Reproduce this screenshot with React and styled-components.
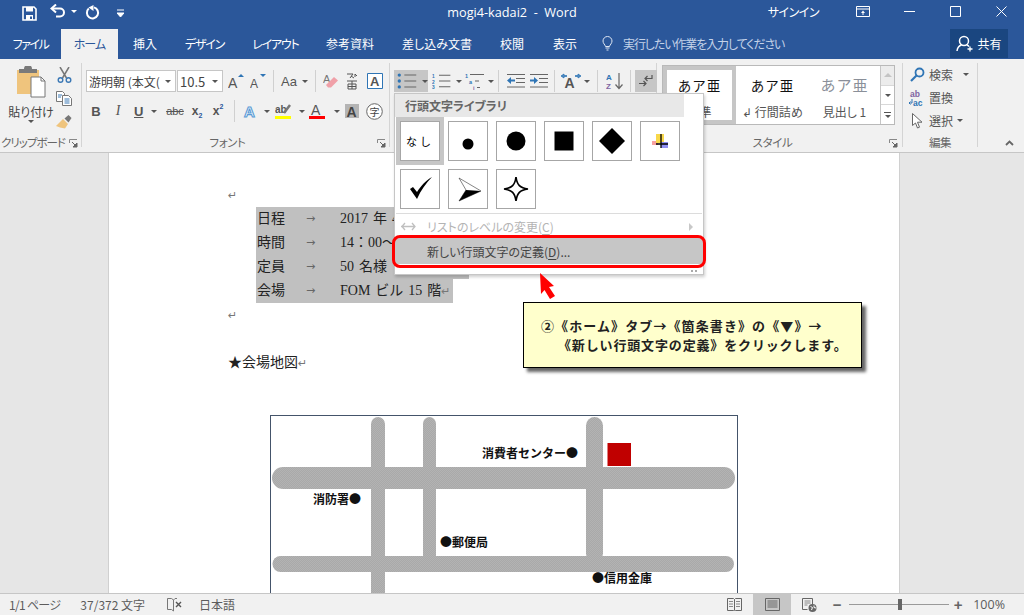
import React from "react";
import styled, { createGlobalStyle } from "styled-components";

const GlobalStyle = createGlobalStyle`
  html, body { margin: 0; padding: 0; background: #e6e6e6; }
  body { font-family: "Noto Sans CJK JP", "Noto Sans", sans-serif; font-size: 12px; }
  * { box-sizing: border-box; }
`;

const UI_FONT = `"Noto Sans CJK JP", "Noto Sans", sans-serif`;

const Screen = styled.div`
  position: relative;
  width: 1024px;
  height: 615px;
  overflow: hidden;
  display: flex;
  flex-direction: column;
  font-feature-settings: "palt";
`;

/* title bar */
const TitleBar = styled.div`
  height: 29px;
  padding-bottom: 6px;
  background: #2b579a;
  color: #fff;
  display: grid;
  grid-template-columns: 1fr auto 1fr;
  align-items: center;
`;
const Quick = styled.div`
  display: flex;
  align-items: center;
  padding-left: 21px;
`;
const QuickBtn = styled.span`
  width: ${(p) => p.$w}px;
  height: 24px;
  margin-left: ${(p) => p.$ml || 0}px;
  margin-top: ${(p) => p.$mt || 0}px;
  display: inline-flex;
  align-items: center;
  justify-content: center;
`;
const DocTitle = styled.div`
  font-family: "Open Sans", sans-serif;
  font-size: 12.7px;
  white-space: pre;
  margin-top: -2px;
`;
const WinControls = styled.div`
  display: flex;
  align-items: center;
  justify-content: flex-end;
`;
const SignIn = styled.span`
  font-size: 12px;
  letter-spacing: -0.5px;
  margin-right: 21px;
  margin-top: -2px;
`;
const WinBtn = styled.span`
  width: 46px;
  height: 24px;
  display: inline-flex;
  align-items: center;
  justify-content: center;
  margin-top: -3px;
`;

/* tabs */
const TabBar = styled.div`
  height: 30px;
  background: #2b579a;
  display: flex;
  align-items: stretch;
  color: #fff;
`;
const Tab = styled.div`
  width: ${(p) => p.$w}px;
  padding-bottom: 2px;
  display: flex;
  align-items: center;
  justify-content: center;
  font-size: 12px;
  letter-spacing: ${(p) => p.$ls || 0}px;
  background: ${(p) => (p.$active ? "#f1f1f1" : "transparent")};
  color: ${(p) => (p.$active ? "#2b579a" : "#fff")};
`;
const TellMe = styled.div`
  display: flex;
  align-items: center;
  gap: 10px;
  margin-left: 8px;
  padding-bottom: 2px;
  font-size: 12px;
  letter-spacing: -1.1px;
  color: #c3d2e8;
  flex: 1;
`;
const Share = styled.div`
  width: 58px;
  height: 29px;
  margin-right: 16px;
  background: #1a4680;
  display: flex;
  align-items: center;
  justify-content: center;
  gap: 3px;
  font-size: 12px;
`;

/* ribbon */
const Ribbon = styled.div`
  height: 94px;
  background: #f1f1f1;
  border-bottom: 1px solid #c6c6c6;
  display: flex;
  padding: 4px 0 5px;
  color: #555;
`;
const Group = styled.div`
  position: relative;
  width: ${(p) => p.$w}px;
  border-right: 1px solid #d4d4d4;
  display: flex;
  flex-direction: column;
`;
const GroupBody = styled.div`
  flex: 1;
  min-height: 0;
  display: flex;
`;
const GroupLabel = styled.div`
  height: 14px;
  margin-bottom: -2px;
  line-height: 14px;
  text-align: center;
  white-space: nowrap;
  font-size: 11.5px;
  letter-spacing: ${(p) => p.$ls || -0.4}px;
  color: #666;
  padding-right: ${(p) => p.$pr || 0}px;
`;
const Launcher = styled.span`
  position: absolute;
  right: ${(p) => p.$r || 4}px;
  bottom: -1px;
  width: 9px;
  height: 9px;
  display: inline-flex;
`;
const PasteBtn = styled.div`
  width: 52px;
  padding-left: 10px;
  padding-top: 3px;
  display: flex;
  flex-direction: column;
  align-items: center;
  font-size: 12px;
  color: #444;
`;
const PasteText = styled.span`
  margin-top: 6px;
  line-height: 16px;
  white-space: nowrap;
`;
const ClipTools = styled.div`
  display: flex;
  flex-direction: column;
  width: 24px;
`;
const ClipTool = styled.span`
  height: 23.5px;
  display: flex;
  align-items: center;
  justify-content: center;
`;
const Stack = styled.div`
  display: flex;
  flex-direction: column;
  padding-top: ${(p) => p.$top || 7}px;
  gap: ${(p) => p.$gap || 8}px;
`;
const ToolRow = styled.div`
  display: flex;
  align-items: center;
  height: 22px;
  padding-left: ${(p) => p.$l || 0}px;
`;
const Combo = styled.div`
  width: ${(p) => p.$w}px;
  height: 22px;
  margin-right: 1px;
  background: #fff;
  border: 1px solid #c6c6c6;
  display: flex;
  align-items: center;
  justify-content: space-between;
  padding: 0 4px 0 2px;
  font-size: 12px;
  color: #444;
  overflow: hidden;
  white-space: nowrap;
`;
const ComboText = styled.span`
  overflow: hidden;
  font-feature-settings: normal;
  font-size: ${(p) => p.$s || 12}px;
`;
const Tool = styled.span`
  width: ${(p) => p.$w || 22}px;
  height: 22px;
  display: inline-flex;
  align-items: center;
  justify-content: ${(p) => (p.$split ? "flex-start" : "center")};
  padding-left: ${(p) => p.$pl || 0}px;
  gap: ${(p) => p.$gap || 0}px;
  background: ${(p) => (p.$on ? "#c6c6c6" : "transparent")};
  margin-left: ${(p) => p.$ml || 0}px;
  color: #555;
`;
const Letter = styled.span`
  font-family: ${(p) => (p.$serif ? `"Liberation Serif", serif` : `"Liberation Sans", sans-serif`)};
  font-weight: ${(p) => p.$weight || 700};
  font-style: ${(p) => (p.$italic ? "italic" : "normal")};
  font-size: ${(p) => p.$s || 13}px;
  color: ${(p) => p.$c || "#555"};
  text-decoration: ${(p) => p.$deco || "none"};
  line-height: 1;
`;
const Sub = styled.sub`
  font-size: 7px;
  color: #2b579a;
  vertical-align: ${(p) => (p.$up ? "6px" : "-3px")};
  line-height: 0;
`;
const Caret = styled.i`
  display: inline-block;
  width: 0;
  height: 0;
  border-left: 3px solid transparent;
  border-right: 3px solid transparent;
  border-top: 3px solid #555;
  flex: none;
`;
const Sep = styled.span`
  width: 1px;
  height: 22px;
  background: #d0d0d0;
  margin-left: ${(p) => p.$l}px;
  margin-right: ${(p) => p.$r}px;
  flex: none;
`;

/* styles gallery */
const Gallery = styled.div`
  margin-left: 5px;
  width: 233px;
  height: 60px;
  margin-top: 2px;
  background: #fff;
  border: 1px solid #b9b9b9;
  display: flex;
`;
const StyleItem = styled.div`
  width: ${(p) => p.$w}px;
  height: 100%;
  border: ${(p) => (p.$selected ? "4px solid #c6c6c6" : "none")};
  display: flex;
  flex-direction: column;
  align-items: center;
  padding-top: ${(p) => (p.$selected ? 5 : 9)}px;
`;
const StyleSample = styled.div`
  height: 20px;
  line-height: 20px;
  font-size: ${(p) => p.$s || 13.5}px;
  letter-spacing: 1px;
  color: ${(p) => p.$c || "#111"};
  font-feature-settings: normal;
`;
const StyleName = styled.div`
  margin-top: 8px;
  font-size: 12px;
  color: #555;
  white-space: pre;
`;
const Scroller = styled.div`
  width: 14px;
  margin-left: auto;
  display: flex;
  flex-direction: column;
  border-left: 1px solid #c6c6c6;
`;
const ScrollBtn = styled.div`
  flex: 1;
  display: flex;
  flex-direction: column;
  gap: 2px;
  align-items: center;
  justify-content: center;
  background: ${(p) => (p.$off ? "#ececec" : "#fff")};
  border-bottom: ${(p) => (p.$last ? "none" : "1px solid #d8d8d8")};
`;
const ScrollUp = styled.i`
  width: 0;
  height: 0;
  border-left: 4px solid transparent;
  border-right: 4px solid transparent;
  border-bottom: 4px solid #c4c4c4;
`;
const ScrollBar = styled.i`
  width: 7px;
  height: 1px;
  background: #555;
`;

/* editing */
const EditRow = styled.div`
  height: 23px;
  display: flex;
  align-items: center;
  padding-left: 6px;
  gap: 3px;
  font-size: 12px;
  color: #555;
`;
const EditIcon = styled.span`
  width: 17px;
  display: inline-flex;
  justify-content: center;
`;
const CaretGap = styled(Caret)`
  margin-left: ${(p) => p.$l}px;
`;
const Collapse = styled.div`
  flex: 1;
  display: flex;
  align-items: flex-end;
  justify-content: flex-end;
  padding: 0 10px 1px 0;
`;

/* document */
const DocArea = styled.div`
  flex: 1;
  min-height: 0;
  background: #e6e6e6;
  display: flex;
  justify-content: center;
  overflow: hidden;
`;
const Page = styled.div`
  width: 792px;
  margin-right: 16px;
  background: #fff;
  border-left: 1px solid #d0d0d0;
  border-right: 1px solid #d0d0d0;
  padding: 30px 0 0 119px;
  font-family: "Liberation Serif", "Noto Sans CJK JP", serif;
  font-size: 14px;
  color: #222;
  font-feature-settings: normal;
`;
const Line = styled.div`
  height: 24px;
  line-height: 24px;
  white-space: nowrap;
`;
const Mark = styled.span`
  color: #777;
  font-size: 11px;
  font-family: "DejaVu Sans", sans-serif;
`;
const SelectedLines = styled.div`
  margin-left: 28px;
`;
const SelRow = styled.div`
  width: ${(p) => p.$w}px;
  height: 24px;
  line-height: 24px;
  background: #c0c0c0;
  display: flex;
  white-space: nowrap;
  word-spacing: 1.5px;
`;
const SelKey = styled.span`
  flex: none;
  width: 50px;
  padding-left: 1px;
`;
const SelArrow = styled.span`
  flex: none;
  width: 34px;
  color: #666;
  font-family: "DejaVu Sans", sans-serif;
  font-size: 11px;
`;
const MapFrame = styled.div`
  margin: 40px 0 0 42px;
  width: 468px;
  height: 260px;
  border: 1px solid #44546a;
  background: #fff;
`;
const MapLabel = styled.text`
  font-family: ${UI_FONT};
  font-weight: 700;
  font-size: 12px;
  fill: #111;
`;

/* status bar */
const StatusBar = styled.div`
  height: 22px;
  background: #f1f1f1;
  border-top: 1px solid #c6c6c6;
  display: flex;
  align-items: center;
  color: #5c5c5c;
  font-size: 12px;
  padding-left: 9px;
`;
const StatusItem = styled.span`
  margin-right: ${(p) => p.$mr || 0}px;
  margin-left: ${(p) => (p.$end ? "auto" : "0")};
  letter-spacing: ${(p) => p.$ls || 0}px;
  white-space: pre;
  display: inline-flex;
  align-items: center;
`;
const ViewBtn = styled.span`
  width: ${(p) => p.$w}px;
  height: 21px;
  background: ${(p) => (p.$on ? "#c6c6c6" : "transparent")};
  display: inline-flex;
  align-items: center;
  justify-content: center;
`;
const Zoomer = styled.div`
  width: 100px;
  height: 21px;
  margin: 0 2px;
  display: flex;
  align-items: center;
  position: relative;
`;
const ZoomTrack = styled.i`
  width: 100%;
  height: 1px;
  background: #9a9a9a;
`;
const ZoomThumb = styled.i`
  position: absolute;
  left: 49px;
  top: 5px;
  width: 4px;
  height: 11px;
  background: #666;
`;
const ZoomSign = styled.span`
  width: ${(p) => p.$w}px;
  text-align: center;
  font-family: "Liberation Sans", sans-serif;
  font-weight: 700;
  font-size: 15px;
  color: #666;
`;
const ZoomPct = styled.span`
  margin-left: 8px;
  margin-right: 19px;
  font-family: "Open Sans", sans-serif;
  font-size: 12.5px;
`;

/* bullets dropdown */
const Menu = styled.div`
  position: absolute;
  left: 394px;
  top: 93px;
  width: 310px;
  height: 182px;
  background: #fff;
  border: 1px solid #c6c6c6;
  box-shadow: 1px 2px 3px rgba(0, 0, 0, 0.2);
`;
const MenuHead = styled.div`
  width: 289px;
  height: 23px;
  line-height: 23px;
  background: #e8e8e8;
  padding-left: 10px;
  font-weight: 700;
  font-size: 12px;
  color: #666;
`;
const BulletGrid = styled.div`
  display: grid;
  grid-template-columns: repeat(6, 48px);
  grid-auto-rows: 48px;
  padding-left: 1px;
`;
const BulletCell = styled.div`
  display: flex;
  align-items: center;
  justify-content: center;
  background: ${(p) => (p.$selected ? "#c6c6c6" : "transparent")};
`;
const BulletBox = styled.div`
  width: 40px;
  height: 40px;
  background: #fff;
  border: 1px solid #a6a6a6;
  display: flex;
  align-items: center;
  justify-content: center;
  font-size: 11px;
  letter-spacing: 3px;
  color: #000;
  font-feature-settings: normal;
`;
const MenuDivider = styled.div`
  height: 1px;
  margin: 0 1px;
  background: #dcdcdc;
`;
const MenuItem = styled.div`
  height: ${(p) => p.$h}px;
  display: flex;
  align-items: center;
  padding-left: 6px;
  color: ${(p) => (p.$off ? "#b4b4b4" : "#444")};
  background: ${(p) => (p.$hot ? "#c6c6c6" : "transparent")};
  font-size: 12px;
  position: relative;
  u { text-underline-offset: 2px; }
`;
const MenuItemIcon = styled.span`
  width: 26px;
  display: inline-flex;
`;
const MenuArrow = styled.i`
  position: absolute;
  right: 10px;
  top: 9px;
  border-top: 4px solid transparent;
  border-bottom: 4px solid transparent;
  border-left: 4px solid #c8c8c8;
`;
const RedFrame = styled.div`
  position: absolute;
  left: 392px;
  top: 235px;
  width: 314px;
  height: 33px;
  border: 3px solid #f00;
  border-radius: 8px;
`;
const Grip = styled.div`
  position: absolute;
  right: 5px;
  bottom: 2px;
  width: 7px;
  height: 2px;
  background: repeating-linear-gradient(90deg, #aaa 0 2px, transparent 2px 4px);
`;
const RedArrow = styled.svg`
  position: absolute;
  left: 538px;
  top: 271px;
`;
const Callout = styled.div`
  position: absolute;
  left: 523px;
  top: 302px;
  width: 339px;
  height: 66px;
  background: #ffffcc;
  border: 1px solid #000;
  box-shadow: 4px 4px 3px #666;
  padding: 13px 0 0 17px;
  font-size: 13px;
  font-weight: 700;
  line-height: 19px;
  color: #222;
  font-feature-settings: normal;
`;
const CalloutLine = styled.div`
  white-space: nowrap;
  letter-spacing: ${(p) => p.$ls || 0}px;
  padding-left: ${(p) => p.$l || 0}px;
`;

/* icons */
const SaveIcon = () => (
  <svg width="15" height="15" viewBox="0 0 15 15">
    <path d="M1 1h11l2 2v11H1z" fill="none" stroke="#fff" strokeWidth="1.6" />
    <path d="M4 1h7v4.5H4z M4 9h7v5H4z" fill="#fff" />
    <path d="M8 10.5h2v2.5H8z" fill="#2b579a" />
  </svg>
);
const UndoIcon = () => (
  <svg width="16" height="14" viewBox="0 0 16 14">
    <path d="M2 4.5h8a4 4 0 0 1 0 8H6" fill="none" stroke="#fff" strokeWidth="2" />
    <path d="M6 .5 1.5 4.5 6 8.5" fill="none" stroke="#fff" strokeWidth="2" />
  </svg>
);
const RedoIcon = () => (
  <svg width="15" height="15" viewBox="0 0 15 15">
    <path d="M9 2.4a5.6 5.6 0 1 1-5.2 1.2" fill="none" stroke="#fff" strokeWidth="2" />
    <path d="M8.5 0v6L3.5 2.5z" fill="#fff" />
  </svg>
);
const WhiteCaret = styled(Caret)`
  border-top-color: #fff;
`;
const QatCaret = () => (
  <svg width="7" height="8" viewBox="0 0 7 8">
    <path d="M0 1h7M0 4h7L3.5 8z" stroke="#fff" fill="#fff" strokeWidth="1" />
  </svg>
);
const RibbonModeIcon = () => (
  <svg width="14" height="11" viewBox="0 0 14 11">
    <path d="M.5.5h13v10H.5zM.5 3h13" fill="none" stroke="#fff" />
    <path d="M7 4.5 9 7H7.5v2h-1V7H5z" fill="#fff" />
  </svg>
);
const CloseIcon = () => (
  <svg width="11" height="11" viewBox="0 0 11 11">
    <path d="M.5.5l10 10M10.5.5l-10 10" stroke="#fff" />
  </svg>
);
const BulbIcon = () => (
  <svg width="11" height="15" viewBox="0 0 11 15">
    <path d="M3.5 10.5C3 8.5 1 7.5 1 5a4.5 4.5 0 0 1 9 0c0 2.5-2 3.5-2.5 5.5z" fill="none" stroke="#dfe7f3" />
    <path d="M3.5 12h4M4.5 14h2" stroke="#dfe7f3" />
  </svg>
);
const PersonIcon = () => (
  <svg width="18" height="17" viewBox="0 0 18 17">
    <circle cx="8" cy="6" r="4.5" fill="none" stroke="#fff" strokeWidth="1.5" />
    <path d="M1 16c.5-3.5 2.5-5.5 4.5-6M11 10c1 .4 1.6 1 2 1.6" fill="none" stroke="#fff" strokeWidth="1.5" />
    <path d="M14 11.5v5M11.5 14h5" stroke="#fff" strokeWidth="1.3" />
  </svg>
);
const PasteIcon = () => (
  <svg width="29" height="32" viewBox="0 0 29 32">
    <path d="M0 4h22v24H0z" fill="#efc47d" />
    <path d="M2 3h5a4 4 0 0 1 8 0h5v4H2z" fill="#7a7a7a" />
    <path d="M14 11h10l4 4v16H14z" fill="#fff" stroke="#777" />
    <path d="M24 11v4h4" fill="none" stroke="#777" />
  </svg>
);
const CutIcon = () => (
  <svg width="15" height="16" viewBox="0 0 15 16">
    <path d="M3 0l6.5 11M12 0 5.5 11" stroke="#777" strokeWidth="1.5" />
    <circle cx="3.5" cy="13" r="2.3" fill="none" stroke="#3b78b5" strokeWidth="1.4" />
    <circle cx="11.5" cy="13" r="2.3" fill="none" stroke="#3b78b5" strokeWidth="1.4" />
  </svg>
);
const CopyIcon = () => (
  <svg width="16" height="15" viewBox="0 0 16 15">
    <path d="M.5.5h6l2 2v8h-8z" fill="#fff" stroke="#777" />
    <path d="M6.5 4.5h6l3 3v7h-9z" fill="#fff" stroke="#777" />
    <path d="M2 4h4M2 6h3M8.5 8h5M8.5 10h5M8.5 12h5" stroke="#3b78b5" />
  </svg>
);
const BrushIcon = () => (
  <svg width="16" height="14" viewBox="0 0 16 14">
    <path d="M0 11 7 4l5 5-3 4.5-5-1z" fill="#efc47d" />
    <path d="M8.5 3.5 12.5 0l3 3-3 4.5z" fill="#777" />
  </svg>
);
const LauncherIcon = () => (
  <svg width="9" height="9" viewBox="0 0 9 9">
    <path d="M.5 4V.5H8" fill="none" stroke="#888" />
    <path d="M3 3l4 4M8 4v4H4z" stroke="#666" fill="#666" />
  </svg>
);
const GrowIcon = ({ down, size }) => (
  <svg width="17" height="17" viewBox="0 0 17 17">
    <text x="0" y="15" fontFamily="Liberation Sans" fontWeight="400" fontSize={size} fill="#555">A</text>
    <path d={down ? "M10 1h6l-3 3z" : "M10 4h6l-3-3z"} fill="#2f75b5" />
  </svg>
);
const EraserIcon = () => (
  <svg width="16" height="16" viewBox="0 0 16 16">
    <text x="0" y="10" fontFamily="Liberation Sans" fontSize="11" fill="#777">A</text>
    <path d="M3 12 11 4l4 3.5-7 7H5z" fill="#f0a0a8" />
  </svg>
);
const RubyIcon = () => (
  <svg width="12" height="17" viewBox="0 0 12 17">
    <path d="M1 1h6L4 5M5 3l3 2M9 4V1l2 2" fill="none" stroke="#555" />
    <path d="M1 8h10M2 11h8v5H2zM6 8v8M2 13.5h8" fill="none" stroke="#555" />
  </svg>
);
const HighlightIcon = ({ color, children }) => (
  <svg width="16" height="16" viewBox="0 0 16 16">
    {children}
    <path d="M0 13h16v3H0z" fill={color} />
  </svg>
);
const ListIcon = ({ kind }) => (
  <svg width="24" height="18" viewBox="0 0 24 18">
    {kind === "bullet" && (
      <>
        <circle cx="2.5" cy="2.5" r="1.8" fill="#2f75b5" />
        <circle cx="2.5" cy="9" r="1.8" fill="#2f75b5" />
        <circle cx="2.5" cy="15.5" r="1.8" fill="#2f75b5" />
      </>
    )}
    {kind === "number" &&
      [5.5, 12, 18].map((y, i) => (
        <text key={y} x="0" y={y} fontSize="5.5" fontFamily="Liberation Sans" fontWeight="700" fill="#2f75b5">
          {i + 1}
        </text>
      ))}
    <path d="M8 2.5h13M8 9h13M8 15.5h13" stroke="#666" strokeWidth="1.2" />
  </svg>
);
const MultiListIcon = () => (
  <svg width="20" height="18" viewBox="0 0 20 18">
    <text x="0" y="6" fontSize="5.5" fontFamily="Liberation Sans" fontWeight="700" fill="#2f75b5">1</text>
    <text x="4" y="12" fontSize="5.5" fontFamily="Liberation Sans" fontWeight="700" fill="#2f75b5">a</text>
    <text x="8" y="18" fontSize="5.5" fontFamily="Liberation Sans" fontWeight="700" fill="#8064a2">i</text>
    <path d="M5 2.5h14M10 9h4M12 15.5h3" stroke="#666" strokeWidth="1.2" />
  </svg>
);
const IndentIcon = ({ dir }) => (
  <svg width="18" height="14" viewBox="0 0 18 14">
    <path d="M0 .5h18M9 4.5h9M9 8.5h9M0 13h18" stroke="#666" />
    <path d={dir === "in" ? "M0 5.5h4V3l4 3.5L4 10V7.5H0z" : "M8 5.5H4V3L0 6.5 4 10V7.5h4z"} fill="#2f75b5" />
  </svg>
);
const AsianIcon = () => (
  <svg width="20" height="15" viewBox="0 0 20 15" overflow="visible">
    <text x="3.5" y="14" fontFamily="Liberation Sans" fontWeight="700" fontSize="14" fill="#555">A</text>
    <path d="M0 2 3 0v1.5h3M0 2l3 2V2.5h3M20 2l-3-2v1.5h-3M20 2l-3 2V2.5h-3" fill="#2f75b5" stroke="#2f75b5" strokeWidth=".8" />
  </svg>
);
const SortIcon = () => (
  <svg width="18" height="18" viewBox="0 0 18 18">
    <text x="0" y="8" fontFamily="Liberation Sans" fontWeight="700" fontSize="8" fill="#2f75b5">A</text>
    <text x="0" y="17" fontFamily="Liberation Sans" fontWeight="700" fontSize="8" fill="#8064a2">Z</text>
    <path d="M13 1v15M9.5 12.5 13 16.5l3.5-4" fill="none" stroke="#666" strokeWidth="1.2" />
  </svg>
);
const ParaMarkIcon = () => (
  <svg width="14" height="14" viewBox="0 0 14 14">
    <path d="M13 1v3.5H6M8.5 2 6 4.5 8.5 7M0 9.5h7M4.5 7 7 9.5 4.5 12" fill="none" stroke="#555" strokeWidth="1.2" />
  </svg>
);
const SearchIcon = () => (
  <svg width="15" height="15" viewBox="0 0 15 15">
    <circle cx="9.5" cy="5.5" r="4" fill="none" stroke="#2f75b5" strokeWidth="1.8" />
    <path d="M6.5 8.5 1 14" stroke="#2f75b5" strokeWidth="2.2" />
  </svg>
);
const ReplaceIcon = () => (
  <svg width="17" height="18" viewBox="0 0 17 18">
    <text x="1" y="8" fontFamily="Liberation Sans" fontWeight="700" fontSize="8.5" fill="#8064a2">ab</text>
    <text x="4" y="17" fontFamily="Liberation Sans" fontWeight="700" fontSize="8.5" fill="#2f75b5">ac</text>
    <path d="M3 10v4H0M1.5 12.5 0 14l1.5 1.5" fill="none" stroke="#2f75b5" />
  </svg>
);
const CursorIcon = () => (
  <svg width="11" height="16" viewBox="0 0 11 16">
    <path d="M.5.5v12l3-2.5 2 5 2-.8-2-5H10z" fill="#fff" stroke="#666" />
  </svg>
);
const ChevronUp = () => (
  <svg width="9" height="6" viewBox="0 0 9 6">
    <path d="M1 5l3.5-3.5L8 5" fill="none" stroke="#666" strokeWidth="1.8" />
  </svg>
);
const ArrowsIcon = () => (
  <svg width="15" height="9" viewBox="0 0 15 9">
    <path d="M4 1 1 4.5 4 8M0 4.5h8M11 1l3 3.5L11 8M7 4.5h7" fill="none" stroke="#c0c0c0" strokeWidth="1.3" />
  </svg>
);
const DictIcon = () => (
  <svg width="15" height="14" viewBox="0 0 15 14">
    <path d="M.5.5h4l2 1.5v11l-2-1.5h-4zM6.5 2 8 .5h2" fill="none" stroke="#777" />
    <path d="M9 4l5 5M14 4 9 9" stroke="#555" strokeWidth="1.4" />
  </svg>
);
const ReadIcon = () => (
  <svg width="15" height="13" viewBox="0 0 15 13">
    <path d="M.5.5h6l1 1 1-1h6v12h-6l-1-.5-1 .5h-6zM7.5 1.5v11" fill="none" stroke="#666" />
    <path d="M2 3.5h4M2 6h4M2 8.5h4M9 3.5h4M9 6h4M9 8.5h4" stroke="#888" />
  </svg>
);
const PrintIcon = () => (
  <svg width="15" height="13" viewBox="0 0 15 13">
    <path d="M.5.5h14v12H.5z" fill="none" stroke="#666" />
    <path d="M2.5 3h10M2.5 5h10M2.5 7h10M2.5 9h10" stroke="#666" />
  </svg>
);
const WebIcon = () => (
  <svg width="15" height="14" viewBox="0 0 15 14">
    <path d="M.5.5h10v7M.5.5v11h5" fill="none" stroke="#666" />
    <path d="M2.5 3h6M2.5 5h6M2.5 7h3" stroke="#888" />
    <circle cx="10.5" cy="10" r="4" fill="#666" />
    <path d="M8.5 8.5l2 1-1 2.5M12 7.5v2l2 .5" stroke="#fff" fill="none" />
  </svg>
);

const ClipboardGroup = () => (
  <Group $w={82}>
    <GroupBody>
      <PasteBtn>
        <PasteIcon />
        <PasteText>貼り付け</PasteText>
        <Caret />
      </PasteBtn>
      <ClipTools>
        <ClipTool><CutIcon /></ClipTool>
        <ClipTool><CopyIcon /></ClipTool>
        <ClipTool><BrushIcon /></ClipTool>
      </ClipTools>
    </GroupBody>
    <GroupLabel $pr={15} $ls={-1}>クリップボード</GroupLabel>
    <Launcher $r={3}><LauncherIcon /></Launcher>
  </Group>
);

const FontGroup = () => (
  <Group $w={308}>
    <GroupBody>
      <Stack>
        <ToolRow $l={4}>
          <Combo $w={90}>
            <ComboText>游明朝 (本文(</ComboText>
            <Caret />
          </Combo>
          <Combo $w={46}>
            <ComboText $s={13}>10.5</ComboText>
            <Caret />
          </Combo>
          <Tool $w={24}><GrowIcon size={14} /></Tool>
          <Tool $w={21}><GrowIcon down size={12} /></Tool>
          <Sep $l={4} $r={3} />
          <Tool $w={36} $split $pl={4} $gap={5}>
            <Letter $weight={400} $s={13}>Aa</Letter>
            <Caret />
          </Tool>
          <Sep $l={2} $r={4} />
          <Tool $w={21}><EraserIcon /></Tool>
          <Tool $w={21}><RubyIcon /></Tool>
          <Tool $w={22} $ml={2}>
            <svg width="16" height="16" viewBox="0 0 16 16">
              <path d="M.5.5h15v15H.5z" fill="#fff" stroke="#2f75b5" />
              <text x="3" y="13" fontFamily="Liberation Sans" fontWeight="700" fontSize="13" fill="#555">A</text>
            </svg>
          </Tool>
        </ToolRow>
        <ToolRow $l={3}>
          <Tool><Letter>B</Letter></Tool>
          <Tool><Letter $italic $serif $weight={400} $s={14}>I</Letter></Tool>
          <Tool $w={34} $split $pl={5} $gap={8}>
            <Letter $deco="underline">U</Letter>
            <Caret />
          </Tool>
          <Tool $ml={1}><Letter $s={11} $weight={400} $deco="line-through">abc</Letter></Tool>
          <Tool><Letter $s={12}>x<Sub>2</Sub></Letter></Tool>
          <Tool $w={20}><Letter $s={12}>x<Sub $up>2</Sub></Letter></Tool>
          <Sep $l={6} $r={5} />
          <Tool $w={32} $split $pl={3} $gap={6}>
            <svg width="15" height="16" viewBox="0 0 15 16" overflow="visible">
              <text x="1" y="14" fontFamily="Liberation Sans" fontWeight="700" fontSize="15" fill="#fff" stroke="#5b9bd5" strokeWidth="1.1">A</text>
            </svg>
            <Caret />
          </Tool>
          <Tool $w={34} $split $pl={3} $gap={8}>
            <HighlightIcon color="#ff0">
              <text x="0" y="10" fontFamily="Liberation Sans" fontWeight="700" fontSize="10" fill="#555">ab</text>
              <path d="M9 10l6-8" stroke="#777" strokeWidth="2.5" />
            </HighlightIcon>
            <Caret />
          </Tool>
          <Tool $w={36} $split $pl={3} $gap={9}>
            <HighlightIcon color="#f00">
              <text x="2" y="12" fontFamily="Liberation Sans" fontWeight="400" fontSize="14" fill="#555">A</text>
            </HighlightIcon>
            <Caret />
          </Tool>
          <Tool $w={20}>
            <svg width="14" height="14" viewBox="0 0 14 14">
              <path d="M0 0h14v14H0z" fill="#b4b4b4" />
              <text x="1.5" y="12.5" fontFamily="Liberation Sans" fontWeight="700" fontSize="14" fill="#444">A</text>
            </svg>
          </Tool>
          <Tool $w={20} $ml={2}>
            <svg width="17" height="17" viewBox="0 0 17 17">
              <circle cx="8.5" cy="8.5" r="7.8" fill="#fff" stroke="#666" />
              <text x="3.5" y="12.5" fontFamily="Noto Sans CJK JP" fontSize="10" fill="#444">字</text>
            </svg>
          </Tool>
        </ToolRow>
      </Stack>
    </GroupBody>
    <GroupLabel $pr={16}>フォント</GroupLabel>
    <Launcher $r={3}><LauncherIcon /></Launcher>
  </Group>
);

const ParagraphGroup = () => (
  <Group $w={267}>
    <GroupBody>
      <Stack>
        <ToolRow $l={4}>
          <Tool $w={34} $on $split $pl={3} $gap={3}>
            <ListIcon kind="bullet" />
            <Caret />
          </Tool>
          <Tool $w={30} $split $ml={4} $pl={0} $gap={3}>
            <ListIcon kind="number" />
            <Caret />
          </Tool>
          <Tool $w={30} $split $ml={3} $gap={3}>
            <MultiListIcon />
            <Caret />
          </Tool>
          <Sep $l={3} $r={5} />
          <Tool $w={24}><IndentIcon dir="out" /></Tool>
          <Tool $w={22}><IndentIcon dir="in" /></Tool>
          <Sep $l={4} $r={6} />
          <Tool $w={36} $split $gap={3}>
            <AsianIcon />
            <Caret />
          </Tool>
          <Sep $l={0} $r={6} />
          <Tool $w={22}><SortIcon /></Tool>
          <Sep $l={4} $r={4} />
          <Tool $w={22} $on><ParaMarkIcon /></Tool>
        </ToolRow>
      </Stack>
    </GroupBody>
  </Group>
);

const StylesGroup = () => (
  <Group $w={246}>
    <GroupBody>
      <Gallery>
        <StyleItem $w={73} $selected>
          <StyleSample>あア亜</StyleSample>
          <StyleName>標準</StyleName>
        </StyleItem>
        <StyleItem $w={73}>
          <StyleSample>あア亜</StyleSample>
          <StyleName>↲ 行間詰め</StyleName>
        </StyleItem>
        <StyleItem $w={71}>
          <StyleSample $s={15} $c="#8a8f99">あア亜</StyleSample>
          <StyleName>見出し 1</StyleName>
        </StyleItem>
        <Scroller>
          <ScrollBtn $off><ScrollUp /></ScrollBtn>
          <ScrollBtn><Caret /></ScrollBtn>
          <ScrollBtn $last><ScrollBar /><Caret /></ScrollBtn>
        </Scroller>
      </Gallery>
    </GroupBody>
    <GroupLabel $pr={14}>スタイル</GroupLabel>
    <Launcher $r={4}><LauncherIcon /></Launcher>
  </Group>
);

const EditGroup = () => (
  <Group $w={75}>
    <GroupBody>
      <div>
        <EditRow><EditIcon><SearchIcon /></EditIcon>検索<CaretGap $l={7} /></EditRow>
        <EditRow><EditIcon><ReplaceIcon /></EditIcon>置換</EditRow>
        <EditRow><EditIcon><CursorIcon /></EditIcon>選択<CaretGap $l={1} /></EditRow>
      </div>
    </GroupBody>
    <GroupLabel>編集</GroupLabel>
  </Group>
);

const Road = ({ x, y, w, h }) => (
  <rect x={x} y={y} width={w} height={h} rx={Math.min(w, h) / 2} fill="url(#roadDots)" />
);

const MapDrawing = () => (
  <svg width="466" height="258" viewBox="0 0 466 258">
    <defs>
      <pattern id="roadDots" width="2" height="2" patternUnits="userSpaceOnUse">
        <rect width="2" height="2" fill="#b3b3b3" />
        <rect width="1" height="1" fill="#a9a9a9" />
        <rect x="1" y="1" width="1" height="1" fill="#a9a9a9" />
      </pattern>
    </defs>
    <Road x={100} y={1} w={14} h={260} />
    <Road x={152} y={1} w={13} h={145} />
    <Road x={315} y={1} w={17} h={145} />
    <Road x={1} y={51} w={463} h={22} />
    <Road x={1.5} y={140} w={461.5} h={16} />
    <rect x={336.5} y={27} width={23.5} height={23} fill="#c00000" />
    <MapLabel x={211} y={41.5}>消費者センター●</MapLabel>
    <MapLabel x={42} y={87.5}>消防署●</MapLabel>
    <MapLabel x={169} y={130.5}>●郵便局</MapLabel>
    <MapLabel x={321} y={166.5}>●信用金庫</MapLabel>
  </svg>
);

const rows = [
  { key: "日程", val: "2017 年 4", w: 213 },
  { key: "時間", val: "14：00～", w: 213 },
  { key: "定員", val: "50 名様", w: 213 },
];

function App() {
  return (
    <>
      <GlobalStyle />
      <Screen>
        <TitleBar>
          <Quick>
            <QuickBtn $w={17} $mt={1}><SaveIcon /></QuickBtn>
            <QuickBtn $w={24} $ml={8} $mt={-3}><UndoIcon /></QuickBtn>
            <QuickBtn $w={8} $mt={-3}><WhiteCaret /></QuickBtn>
            <QuickBtn $w={28} $mt={-1}><RedoIcon /></QuickBtn>
            <QuickBtn $w={28}><QatCaret /></QuickBtn>
          </Quick>
          <DocTitle>mogi4-kadai2  -  Word</DocTitle>
          <WinControls>
            <SignIn>サインイン</SignIn>
            <WinBtn><RibbonModeIcon /></WinBtn>
            <WinBtn>
              <svg width="11" height="1"><path d="M0 .5h11" stroke="#fff" /></svg>
            </WinBtn>
            <WinBtn>
              <svg width="11" height="11"><path d="M.5.5h10v10H.5z" fill="none" stroke="#fff" /></svg>
            </WinBtn>
            <WinBtn><CloseIcon /></WinBtn>
          </WinControls>
        </TitleBar>

        <TabBar>
          <Tab $w={61} $ls={-1.5}>ファイル</Tab>
          <Tab $w={57} $ls={-1} $active>ホーム</Tab>
          <Tab $w={54}>挿入</Tab>
          <Tab $w={65} $ls={-1.2}>デザイン</Tab>
          <Tab $w={77} $ls={-1.2}>レイアウト</Tab>
          <Tab $w={72}>参考資料</Tab>
          <Tab $w={102}>差し込み文書</Tab>
          <Tab $w={48}>校閲</Tab>
          <Tab $w={58}>表示</Tab>
          <TellMe>
            <BulbIcon />
            実行したい作業を入力してください
          </TellMe>
          <Share>
            <PersonIcon />
            共有
          </Share>
        </TabBar>

        <Ribbon>
          <ClipboardGroup />
          <FontGroup />
          <ParagraphGroup />
          <StylesGroup />
          <EditGroup />
          <Collapse><ChevronUp /></Collapse>
        </Ribbon>

        <DocArea>
          <Page>
            <Line><Mark>↵</Mark></Line>
            <SelectedLines>
              {rows.map((r) => (
                <SelRow key={r.key} $w={r.w}>
                  <SelKey>{r.key}</SelKey>
                  <SelArrow>→</SelArrow>
                  <span>{r.val}</span>
                </SelRow>
              ))}
              <SelRow $w={197}>
                <SelKey>会場</SelKey>
                <SelArrow>→</SelArrow>
                <span>FOM ビル 15 階<Mark>↵</Mark></span>
              </SelRow>
            </SelectedLines>
            <Line><Mark>↵</Mark></Line>
            <Line />
            <Line>★会場地図<Mark>↵</Mark></Line>
            <MapFrame><MapDrawing /></MapFrame>
          </Page>
        </DocArea>

        <StatusBar>
          <StatusItem $mr={20} $ls={-0.7}>1/1 ページ</StatusItem>
          <StatusItem $mr={22}>37/372 文字</StatusItem>
          <StatusItem $mr={17}><DictIcon /></StatusItem>
          <StatusItem>日本語</StatusItem>
          <StatusItem $end>
            <ViewBtn $w={38}><ReadIcon /></ViewBtn>
            <ViewBtn $w={38} $on><PrintIcon /></ViewBtn>
            <ViewBtn $w={36}><WebIcon /></ViewBtn>
            <ZoomSign $w={20}>−</ZoomSign>
            <Zoomer><ZoomTrack /><ZoomThumb /></Zoomer>
            <ZoomSign $w={14}>+</ZoomSign>
            <ZoomPct>100%</ZoomPct>
          </StatusItem>
        </StatusBar>

        <Menu>
          <MenuHead>行頭文字ライブラリ</MenuHead>
          <BulletGrid>
            <BulletCell $selected><BulletBox>なし</BulletBox></BulletCell>
            <BulletCell>
              <BulletBox>
                <svg width="38" height="38"><circle cx="19" cy="22" r="5.5" /></svg>
              </BulletBox>
            </BulletCell>
            <BulletCell>
              <BulletBox>
                <svg width="38" height="38"><circle cx="19" cy="19" r="9.5" /></svg>
              </BulletBox>
            </BulletCell>
            <BulletCell>
              <BulletBox>
                <svg width="38" height="38"><path d="M9.5 9.5h19v19h-19z" /></svg>
              </BulletBox>
            </BulletCell>
            <BulletCell>
              <BulletBox>
                <svg width="38" height="38"><path d="M19 6l13 13-13 13L6 19z" /></svg>
              </BulletBox>
            </BulletCell>
            <BulletCell>
              <BulletBox>
                <svg width="38" height="38">
                  <path d="M11 19h6v4h-6z" fill="#f8a0a0" />
                  <path d="M15 12h8v9h-8z" fill="#f8d84a" />
                  <path d="M20 20h7v6h-7z" fill="#8f8ff0" />
                  <path d="M20 12v14M15 22h12" stroke="#000" strokeWidth="1.3" />
                </svg>
              </BulletBox>
            </BulletCell>
            <BulletCell>
              <BulletBox>
                <svg width="38" height="38">
                  <path d="M9 19l3-2 4 5C20 16 24 11 31 7 25 13 20 20 16 29z" />
                </svg>
              </BulletBox>
            </BulletCell>
            <BulletCell>
              <BulletBox>
                <svg width="38" height="38">
                  <path d="M10 8 32 21 10 31l7-11z" fill="#fff" stroke="#333" strokeWidth=".6" />
                  <path d="M32 21 10 31l7-11z" />
                </svg>
              </BulletBox>
            </BulletCell>
            <BulletCell>
              <BulletBox>
                <svg width="38" height="38">
                  <path d="M19 7C20 15 23 18 31 19 23 20 20 23 19 31 18 23 15 20 7 19 15 18 18 15 19 7z" fill="#fff" stroke="#000" strokeWidth="1.7" />
                </svg>
              </BulletBox>
            </BulletCell>
          </BulletGrid>
          <MenuDivider />
          <MenuItem $off $h={24}>
            <MenuItemIcon><ArrowsIcon /></MenuItemIcon>
            リストのレベルの変更(<u>C</u>)
            <MenuArrow />
          </MenuItem>
          <MenuItem $hot $h={26}>
            <MenuItemIcon />
            新しい行頭文字の定義(<u>D</u>)...
          </MenuItem>
          <Grip />
        </Menu>
        <RedFrame />
        <RedArrow width="20" height="30" viewBox="0 0 20 30">
          <path d="M2 2 16 15l-5 1 6 9-5 3-5.5-9L3 23z" fill="#f00" />
        </RedArrow>
        <Callout>
          <CalloutLine $ls={1.1}>②《ホーム》タブ→《箇条書き》の《▼》→</CalloutLine>
          <CalloutLine $l={17} $ls={0.85}>《新しい行頭文字の定義》をクリックします。</CalloutLine>
        </Callout>
      </Screen>
    </>
  );
}

export default App;
